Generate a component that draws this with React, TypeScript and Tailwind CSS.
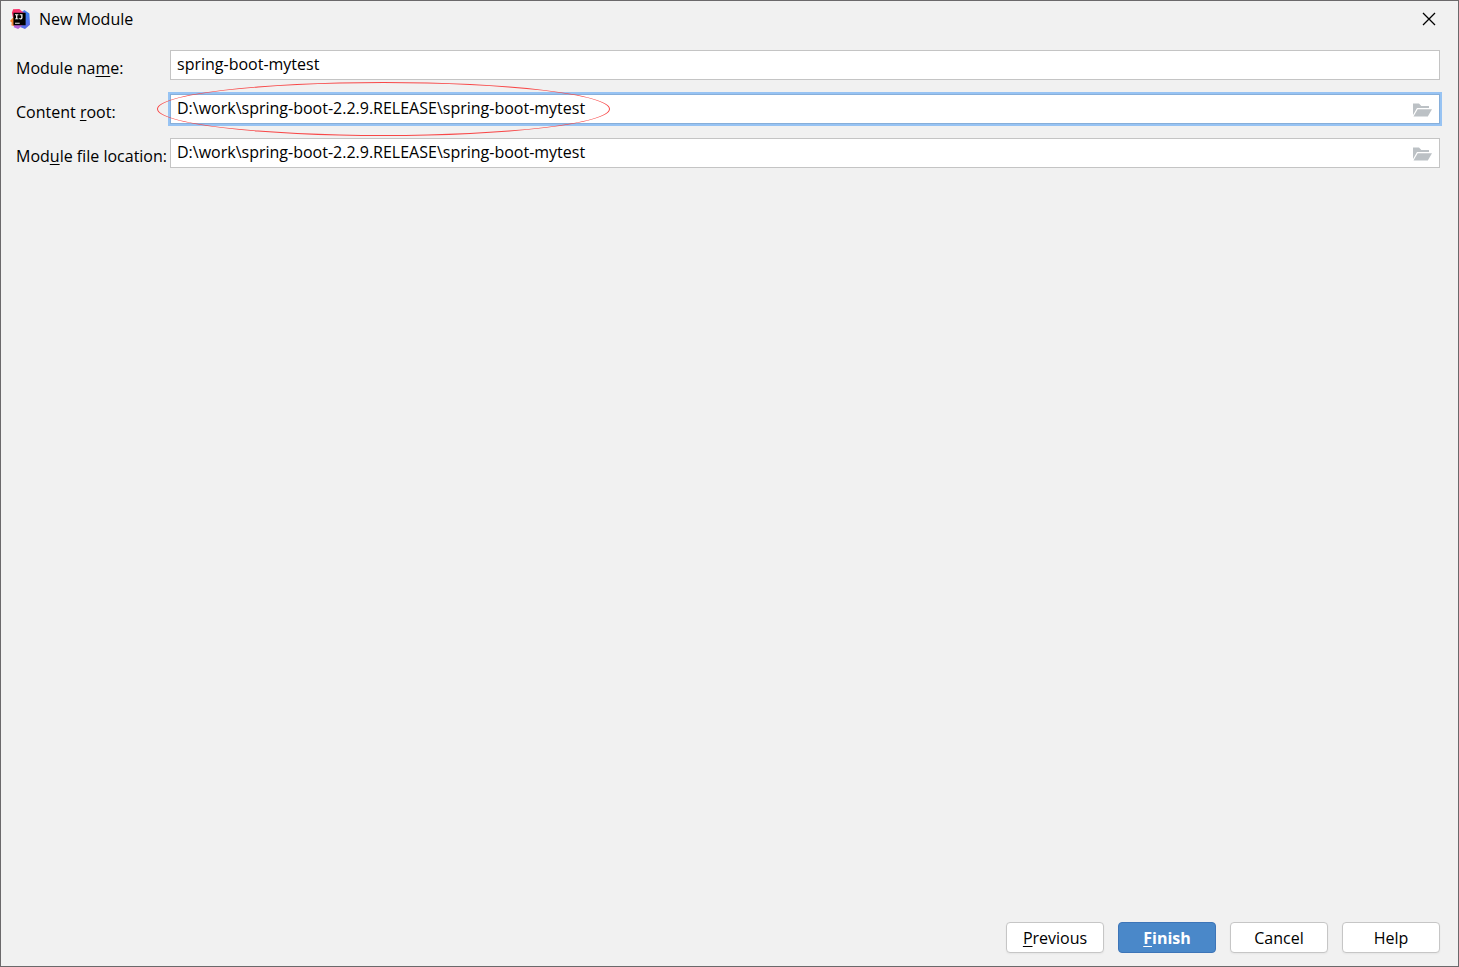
import { useState } from "react";
import type { ReactNode } from "react";

function AppLogo() {
  return (
    <svg viewBox="0 0 64 64" className="h-5 w-5" aria-hidden="true">
      <defs>
        <linearGradient id="logo-orange" x1="0" y1="0" x2="1" y2="1">
          <stop offset="0" stopColor="#fc801d" />
          <stop offset="0.5" stopColor="#f58a45" />
          <stop offset="1" stopColor="#d86aa0" />
        </linearGradient>
        <linearGradient id="logo-pink" x1="0" y1="0" x2="1" y2="0.6">
          <stop offset="0" stopColor="#fe2857" />
          <stop offset="0.6" stopColor="#f0387f" />
          <stop offset="1" stopColor="#9a5be0" />
        </linearGradient>
        <linearGradient id="logo-blue" x1="0" y1="0" x2="0.4" y2="1">
          <stop offset="0" stopColor="#7a78ea" />
          <stop offset="0.4" stopColor="#3a82f2" />
          <stop offset="1" stopColor="#5a6ce6" />
        </linearGradient>
      </defs>
      <path d="M46 3 62 14 64 50 48 64 24 54 36 10Z" fill="url(#logo-blue)" />
      <path d="M6 12 10 1 30 0l8 7 10 6-32 28L9 26Z" fill="url(#logo-pink)" />
      <path d="M12 26 7 30 0 38l6 6-2 8 18 6 18-13Z" fill="url(#logo-orange)" />
      <path d="M14 50h28L26 64 12 58Z" fill="#b45fd8" />
      <path d="M11 12h39v40H11Z" fill="#000" />
      <path
        d="M16 17h11v3h-3.500v10H27v3H16v-3h3.500V20H16Zm20 0h4v11q0 5.500-5.500 5.500-3.500 0-5.500-2.500l2.500-2.800q1.300 1.600 2.700 1.600 1.800 0 1.800-2.200V20H31v-3Z"
        fill="#fff"
      />
      <path d="M16 44h15v3H16Z" fill="#fff" />
    </svg>
  );
}

function CloseIcon() {
  return (
    <svg viewBox="0 0 14 14" className="h-3.5 w-3.5" aria-hidden="true">
      <path d="M1 1l12 12M13 1 1 13" stroke="#000" strokeWidth="1.300" fill="none" />
    </svg>
  );
}

function FolderIcon() {
  return (
    <svg viewBox="0 0 20 16" className="h-4 w-5" aria-hidden="true">
      <path d="M1 1.500h6L9.300 4H17v2H5L1 13Z" fill="#bcc1c5" />
      <path d="M5.700 7.200H20L15.800 14.500H1.500Z" fill="#bcc1c5" />
    </svg>
  );
}

interface FieldProps {
  id: string;
  label: ReactNode;
  value: string;
  onChange: (value: string) => void;
  browse?: boolean;
  active?: boolean;
  children?: ReactNode;
}

function Field({ id, label, value, onChange, browse, active, children }: FieldProps) {
  return (
    <div className="relative flex items-center">
      <label htmlFor={id} className="w-[154px] shrink-0 whitespace-nowrap pt-1.5">
        {label}
      </label>
      <div
        className={`flex h-[30px] flex-1 items-center border bg-white ${
          active ? "border-[#87afda] ring-2 ring-[#97c3f3]" : "border-[#c4c4c4]"
        }`}
      >
        <input
          id={id}
          type="text"
          value={value}
          onChange={(e) => onChange(e.target.value)}
          className="h-full min-w-0 flex-1 px-1.5 pb-0.5 outline-none"
        />
        {browse && (
          <button type="button" aria-label="Browse" className="mr-[7px] pt-0.5">
            <FolderIcon />
          </button>
        )}
      </div>
      {children}
    </div>
  );
}

function DialogButton({ children, primary }: { children: ReactNode; primary?: boolean }) {
  return (
    <button
      type="button"
      className={`h-[31px] w-[98px] rounded border ${
        primary
          ? "border-[#3d75b8] bg-[#4a88c9] font-bold text-white"
          : "border-[#c6c6c6] bg-white shadow-xs"
      }`}
    >
      {children}
    </button>
  );
}

function Mnemonic({ children }: { children: ReactNode }) {
  return <span className="underline underline-offset-2">{children}</span>;
}

export default function App() {
  const [name, setName] = useState("spring-boot-mytest");
  const [root, setRoot] = useState("D:\\work\\spring-boot-2.2.9.RELEASE\\spring-boot-mytest");
  const [location, setLocation] = useState(
    "D:\\work\\spring-boot-2.2.9.RELEASE\\spring-boot-mytest"
  );

  return (
    <div className="flex min-h-screen flex-col border border-[#6b696b] bg-[#f1f1f1] font-['Open_Sans','Noto_Sans',sans-serif] text-base leading-6 text-black">
      <header className="flex h-9 items-center justify-between pl-[9px] pr-[22px]">
        <div className="flex items-center gap-[9px]">
          <AppLogo />
          <h1>New Module</h1>
        </div>
        <button type="button" aria-label="Close">
          <CloseIcon />
        </button>
      </header>

      <main className="flex flex-1 flex-col gap-3.5 pl-[15px] pr-[18px] pt-[13px]">
        <Field
          id="module-name"
          label={<>Module na<Mnemonic>m</Mnemonic>e:</>}
          value={name}
          onChange={setName}
        />
        <Field
          id="content-root"
          label={<>Content <Mnemonic>r</Mnemonic>oot:</>}
          value={root}
          onChange={setRoot}
          browse
          active
        >
          {/* red mark around the path */}
          <div className="pointer-events-none absolute -top-3 left-[141px] h-[54px] w-[453px] rounded-[50%] border border-[#f84848]" />
        </Field>
        <Field
          id="module-location"
          label={<>Mod<Mnemonic>u</Mnemonic>le file location:</>}
          value={location}
          onChange={setLocation}
          browse
        />
      </main>

      <footer className="flex justify-end gap-3.5 pb-[13px] pr-[18px]">
        <DialogButton>
          <Mnemonic>P</Mnemonic>revious
        </DialogButton>
        <DialogButton primary>
          <Mnemonic>F</Mnemonic>inish
        </DialogButton>
        <DialogButton>Cancel</DialogButton>
        <DialogButton>Help</DialogButton>
      </footer>
    </div>
  );
}
